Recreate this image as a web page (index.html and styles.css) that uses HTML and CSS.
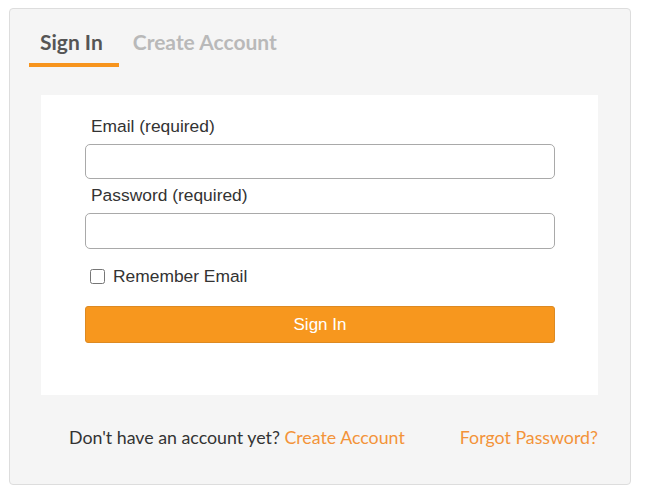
FILE: index.html
```html
<!DOCTYPE html>
<html lang="en">
<head>
<meta charset="utf-8">
<title>Sign In</title>
<link rel="stylesheet" href="styles.css">
</head>
<body>
<div class="card">
  <div class="tabs">
    <div class="tab active">Sign In</div>
    <div class="tab">Create Account</div>
  </div>
  <form class="panel">
    <label class="label" for="email">Email (required)</label>
    <input class="field" id="email" type="text">
    <label class="label" for="pw">Password (required)</label>
    <input class="field" id="pw" type="password">
    <label class="remember"><input class="check" type="checkbox"><span>Remember Email</span></label>
    <button class="btn" type="button">Sign In</button>
  </form>
  <div class="footer">
    <span class="prompt">Don't have an account yet? <a class="link" href="#">Create Account</a></span>
    <a class="link" href="#">Forgot Password?</a>
  </div>
</div>
</body>
</html>
```
FILE: styles.css
```css
html, body {
  margin: 0;
  background: #ffffff;
}
body {
  padding: 8px 0 0 9px;
}
.card {
  width: 622px;
  box-sizing: border-box;
  border: 1px solid #dddddd;
  border-radius: 4px;
  background: #f5f5f5;
  padding-bottom: 36px;
}
.tabs {
  display: flex;
  padding: 20px 0 0 19px;
}
.tab {
  font-family: Lato, "Liberation Sans", sans-serif;
  font-weight: 700;
  font-size: 21px;
  line-height: 25px;
  color: #b9b9b9;
  padding: 0 13px 9px 14px;
  border-bottom: 4px solid transparent;
}
.tab.active {
  color: #555555;
  border-bottom-color: #f7941d;
  padding-left: 11px;
  padding-right: 16px;
}
.panel {
  display: flex;
  flex-direction: column;
  margin: 28px 32px 0 31px;
  background: #ffffff;
  padding: 22px 43px 52px 44px;
  height: 300px;
  box-sizing: border-box;
}
.label {
  font-family: "Liberation Sans", Arial, sans-serif;
  font-size: 17.4px;
  line-height: 19.5px;
  color: #333333;
  padding-left: 6px;
  margin-bottom: 7px;
}
.field {
  height: 36px;
  box-sizing: border-box;
  border: 1px solid #a9a9a9;
  border-radius: 5px;
  margin: 0 0 7px 0;
  padding: 0 8px;
  background: #ffffff;
}
.remember {
  display: flex;
  align-items: center;
  margin-top: 11px;
  font-family: "Liberation Sans", Arial, sans-serif;
  font-size: 17.4px;
  line-height: 19.5px;
  color: #333333;
}
.check {
  width: 15px;
  height: 15px;
  margin: 0 8px 0 5px;
}
.btn {
  margin-top: 20px;
  height: 37px;
  border: 1px solid #dd8a22;
  border-radius: 3px;
  background: #f7971e;
  color: #ffffff;
  font-family: "Liberation Sans", Arial, sans-serif;
  font-size: 17px;
}
.footer {
  display: flex;
  justify-content: space-between;
  margin: 31px 32px 0 31px;
  padding-left: 28px;
  font-family: Lato, "Liberation Sans", sans-serif;
  font-size: 17.8px;
  color: #333333;
}
.link {
  color: #f39339;
  text-decoration: none;
}
```
